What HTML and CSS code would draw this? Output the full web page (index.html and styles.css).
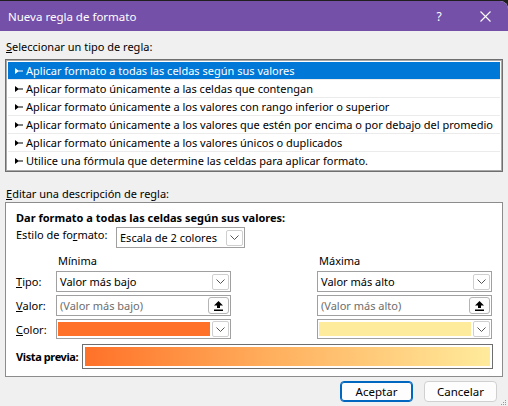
FILE: index.html
```html
<!DOCTYPE html>
<html lang="es">
<head>
    <meta charset="UTF-8">
    <meta name="viewport" content="width=device-width, initial-scale=1.0">
    <title>Nueva regla de formato</title>
    <link rel="stylesheet" href="styles.css">
</head>
<body>
    <div class="window">
        <div class="titlebar">
            <span class="title">Nueva regla de formato</span>
            <span class="tb-btn">?</span>
            <span class="tb-btn">
                <svg width="11" height="11" viewBox="0 0 11 11"><path d="M0.5 0.5 L10.5 10.5 M10.5 0.5 L0.5 10.5" stroke="#fff" stroke-width="1.1" fill="none"/></svg>
            </span>
        </div>

        <div class="content">
            <div class="section-label"><u>S</u>eleccionar un tipo de regla:</div>
            <ul class="rule-list">
                <li class="selected"><svg class="bullet" width="8" height="6" viewBox="0 0 8 6"><path d="M0 0 L4 3 L0 6 Z M2 2.5 H8 V3.5 H2 Z" fill="currentColor"/></svg>Aplicar formato a todas las celdas según sus valores</li>
                <li><svg class="bullet" width="8" height="6" viewBox="0 0 8 6"><path d="M0 0 L4 3 L0 6 Z M2 2.5 H8 V3.5 H2 Z" fill="currentColor"/></svg>Aplicar formato únicamente a las celdas que contengan</li>
                <li><svg class="bullet" width="8" height="6" viewBox="0 0 8 6"><path d="M0 0 L4 3 L0 6 Z M2 2.5 H8 V3.5 H2 Z" fill="currentColor"/></svg>Aplicar formato únicamente a los valores con rango inferior o superior</li>
                <li><svg class="bullet" width="8" height="6" viewBox="0 0 8 6"><path d="M0 0 L4 3 L0 6 Z M2 2.5 H8 V3.5 H2 Z" fill="currentColor"/></svg>Aplicar formato únicamente a los valores que estén por encima o por debajo del promedio</li>
                <li><svg class="bullet" width="8" height="6" viewBox="0 0 8 6"><path d="M0 0 L4 3 L0 6 Z M2 2.5 H8 V3.5 H2 Z" fill="currentColor"/></svg>Aplicar formato únicamente a los valores únicos o duplicados</li>
                <li><svg class="bullet" width="8" height="6" viewBox="0 0 8 6"><path d="M0 0 L4 3 L0 6 Z M2 2.5 H8 V3.5 H2 Z" fill="currentColor"/></svg>Utilice una fórmula que determine las celdas para aplicar formato.</li>
            </ul>

            <div class="section-label edit-label"><u>E</u>ditar una descripción de regla:</div>
            <div class="desc">
                <div class="desc-title">Dar formato a todas las celdas según sus valores:</div>
                <div class="style-row">
                    <span class="style-label">Estilo de fo<u>r</u>mato:</span>
                    <div class="select style-select">
                        <span class="select-text">Escala de 2 colores</span>
                        <span class="chev"><svg width="9" height="5" viewBox="0 0 9 5"><path d="M0.5 0.5 L4.5 4.5 L8.5 0.5" stroke="#555" fill="none"/></svg></span>
                    </div>
                </div>

                <div class="scale-grid">
                    <span></span>
                    <span class="col-head">Mínima</span>
                    <span class="col-head">Máxima</span>

                    <span class="row-label"><u>T</u>ipo:</span>
                    <div class="select">
                        <span class="select-text">Valor más bajo</span>
                        <span class="chev"><svg width="9" height="5" viewBox="0 0 9 5"><path d="M0.5 0.5 L4.5 4.5 L8.5 0.5" stroke="#555" fill="none"/></svg></span>
                    </div>
                    <div class="select">
                        <span class="select-text">Valor más alto</span>
                        <span class="chev"><svg width="9" height="5" viewBox="0 0 9 5"><path d="M0.5 0.5 L4.5 4.5 L8.5 0.5" stroke="#555" fill="none"/></svg></span>
                    </div>

                    <span class="row-label"><u>V</u>alor:</span>
                    <div class="select input">
                        <span class="select-text placeholder">(Valor más bajo)</span>
                        <span class="ref-btn"><svg width="9" height="10" viewBox="0 0 9 10"><path d="M4.5 0 L9 4.5 H6 V7 H3 V4.5 H0 Z M0 8.5 H9 V10 H0 Z" fill="#000"/></svg></span>
                    </div>
                    <div class="select input">
                        <span class="select-text placeholder">(Valor más alto)</span>
                        <span class="ref-btn"><svg width="9" height="10" viewBox="0 0 9 10"><path d="M4.5 0 L9 4.5 H6 V7 H3 V4.5 H0 Z M0 8.5 H9 V10 H0 Z" fill="#000"/></svg></span>
                    </div>

                    <span class="row-label"><u>C</u>olor:</span>
                    <div class="select color-select">
                        <span class="swatch swatch-min"></span>
                        <span class="chev"><svg width="9" height="5" viewBox="0 0 9 5"><path d="M0.5 0.5 L4.5 4.5 L8.5 0.5" stroke="#555" fill="none"/></svg></span>
                    </div>
                    <div class="select color-select">
                        <span class="swatch swatch-max"></span>
                        <span class="chev"><svg width="9" height="5" viewBox="0 0 9 5"><path d="M0.5 0.5 L4.5 4.5 L8.5 0.5" stroke="#555" fill="none"/></svg></span>
                    </div>
                </div>

                <div class="preview-row">
                    <span class="preview-label">Vista previa:</span>
                    <div class="preview-box"><div class="preview-fill"></div></div>
                </div>
            </div>

            <div class="buttons">
                <button class="btn btn-default">Aceptar</button>
                <button class="btn">Cancelar</button>
            </div>
        </div>

        <svg class="grip" width="7" height="7" viewBox="0 0 7 7">
            <rect x="5" y="1" width="1" height="1" fill="#999"/>
            <rect x="3" y="3" width="1" height="1" fill="#999"/>
            <rect x="5" y="3" width="1" height="1" fill="#999"/>
            <rect x="1" y="5" width="1" height="1" fill="#999"/>
            <rect x="3" y="5" width="1" height="1" fill="#999"/>
            <rect x="5" y="5" width="1" height="1" fill="#999"/>
        </svg>
    </div>
</body>
</html>
```

FILE: styles.css
```css
body {
    margin: 0;
    background: #1f1f1f;
    font-family: "Segoe UI", "Noto Sans", sans-serif;
    font-size: 11px;
    color: #000;
}
.window {
    position: relative;
    margin-top: 1px;
    width: 508px;
    height: 405px;
    background: #f0f0f0;
    border-top-right-radius: 8px;
    overflow: hidden;
}
.titlebar {
    display: flex;
    align-items: center;
    height: 30px;
    padding-left: 8px;
    background: #7450a8;
    color: #fff;
}
.title {
    flex: 1;
    font-size: 11.5px;
}
.tb-btn {
    display: flex;
    align-items: center;
    justify-content: center;
    width: 46px;
    height: 30px;
    font-size: 12px;
}
.content {
    padding: 0 5px;
}
.section-label {
    height: 16px;
    line-height: 16px;
    margin-top: 8px;
    padding-left: 1px;
}
.edit-label {
    margin-top: 14px;
}
.rule-list {
    list-style-type: none;
    margin: 4px 0 0;
    padding: 2px;
    background: #fff;
    border: 1px solid #6f6f6f;
    box-shadow: inset 0 0 0 1px #a9a9a9;
}
.rule-list li {
    display: flex;
    align-items: center;
    gap: 3px;
    height: 17px;
    padding-left: 7px;
    border-bottom: 1px solid #ebebeb;
    white-space: nowrap;
}
.rule-list li:last-child {
    border-bottom: none;
}
.rule-list li.selected {
    background: #0078d7;
    color: #fff;
}
.bullet {
    flex: none;
}
.desc {
    height: 166px;
    padding: 7px 9px 0 10px;
    background: #fff;
    border: 1px solid #8c8c8c;
}
.desc-title {
    height: 16px;
    line-height: 16px;
    font-weight: bold;
}
.style-row {
    display: flex;
    align-items: flex-start;
    margin-top: 1px;
}
.style-label {
    width: 100px;
    line-height: 14px;
    padding-top: 1px;
}
.select {
    display: flex;
    align-items: center;
    height: 21px;
    box-sizing: border-box;
    padding: 0 1px 0 3px;
    background: #fff;
    border: 1px solid #a0a0a0;
}
.style-select {
    width: 129px;
}
.select-text {
    flex: 1;
    white-space: nowrap;
}
.placeholder {
    color: #6d6d6d;
}
.chev {
    display: flex;
    align-items: center;
    justify-content: center;
    width: 17px;
    height: 16px;
    box-sizing: border-box;
    border: 1px solid #cfcfcf;
    border-radius: 2px;
}
.scale-grid {
    display: grid;
    grid-template-columns: 40px 175px 86px 175px;
    grid-template-rows: 19px 21px 21px 20px;
    row-gap: 3px;
    margin-top: 1px;
}
.scale-grid .col-head {
    align-self: end;
    line-height: 14px;
    padding-left: 2px;
}
.scale-grid .col-head:nth-child(3) {
    grid-column: 4 / 5;
}
.scale-grid > .select:nth-of-type(even) {
    grid-column: 4 / 5;
}
.row-label {
    display: flex;
    align-items: center;
}
.ref-btn {
    display: flex;
    align-items: center;
    justify-content: center;
    width: 21px;
    height: 17px;
    box-sizing: border-box;
    background: #fdfdfd;
    border: 1px solid #b5b5b5;
    border-radius: 3px;
}
.color-select {
    height: 20px;
    padding-left: 1px;
}
.swatch {
    flex: 1;
    height: 14px;
    margin-right: 2px;
}
.swatch-min {
    background: #ff7128;
}
.swatch-max {
    background: #ffeb9c;
}
.preview-row {
    display: flex;
    align-items: center;
    margin-top: 5px;
}
.preview-label {
    font-weight: bold;
    letter-spacing: -0.4px;
    white-space: nowrap;
}
.preview-box {
    flex: none;
    width: 411px;
    height: 25px;
    margin-left: auto;
    box-sizing: border-box;
    padding: 2px;
    border: 1px solid #6e6e6e;
}
.preview-fill {
    height: 100%;
    background: linear-gradient(to right, #ff7128, #ffae5c 45%, #ffeb9c);
}
.buttons {
    display: flex;
    justify-content: flex-end;
    gap: 11px;
    margin-top: 4px;
    padding-right: 6px;
}
.btn {
    width: 73px;
    height: 21px;
    padding: 0;
    font-family: inherit;
    font-size: 11.5px;
    background: #fdfdfd;
    border: 1px solid #d0d0d0;
    border-radius: 4px;
    color: #000;
}
.btn-default {
    border: 1px solid #0067c0;
    box-shadow: inset 0 0 0 1px #0067c0;
}
.grip {
    position: absolute;
    right: 1px;
    bottom: 0;
}
```
